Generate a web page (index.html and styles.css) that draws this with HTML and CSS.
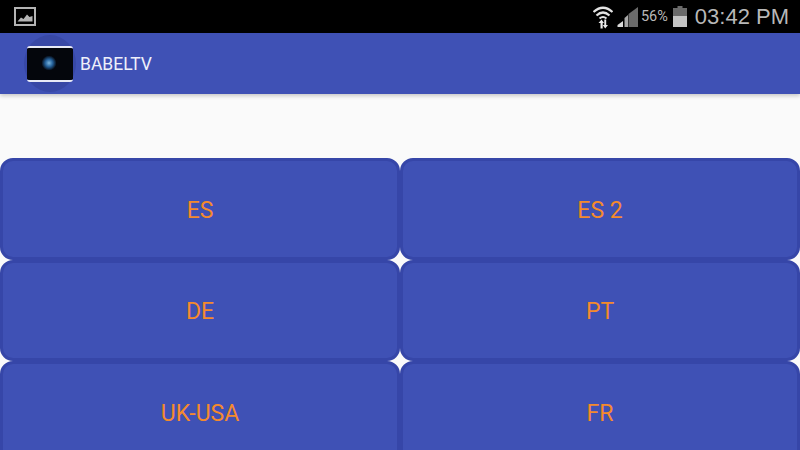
FILE: index.html
```html
<!DOCTYPE html>
<html>
<head>
  <title>BabelTV</title>
  <link rel="stylesheet" href="styles.css">
</head>
<body>
  <div class="status-bar">
    <svg class="status-picture" width="22" height="19" viewBox="0 0 22 19">
      <rect x="1" y="1" width="20" height="17" fill="none" stroke="#b4b4b4" stroke-width="2"/>
      <path d="M3.500 14.500 L7 10.500 L9.500 12 L13 7.500 L15.500 10 L18.500 9 V14.500 Z" fill="#b4b4b4"/>
    </svg>
    <div class="status-right">
      <svg class="status-wifi" width="20" height="24" viewBox="0 0 20 24">
        <path d="M0.500 7 Q10 -1.500 19.500 7" fill="none" stroke="#e2e2e2" stroke-width="2.200"/>
        <path d="M3.500 10.500 Q10 4.500 16.500 10.500" fill="none" stroke="#e2e2e2" stroke-width="2.200"/>
        <path d="M6.500 13.500 Q10 10.500 13.500 13.500" fill="none" stroke="#e2e2e2" stroke-width="2"/>
        <path d="M7.500 23.500 V18 H5.500 L8.500 14.500 L11 18 H9.700 V23.500 Z M11.300 14.500 H13.200 V20 H15 L12.200 23.500 L9.800 20 H11.300 Z" fill="#ececec"/>
      </svg>
      <svg class="status-signal" width="21" height="22" viewBox="0 0 21 22">
        <path d="M21 1 V21 H11.500 V8 Z" fill="#6a6a6a"/>
        <path d="M11 9 V21 H7.500 V12 Z" fill="#a8a8a8"/>
        <path d="M6 15 V21 H0.500 V19 Z" fill="#dadada"/>
      </svg>
      <span class="status-battery-text">56%</span>
      <svg class="status-battery" width="14" height="21" viewBox="0 0 14 21">
        <path d="M4.500 0 H9.500 V2 H14 V21 H0 V2 H4.500 Z" fill="#6a6a6a"/>
        <rect y="10" width="14" height="11" fill="#c4c4c4"/>
      </svg>
      <span class="status-time">03:42 PM</span>
    </div>
  </div>

  <header class="app-bar">
    <div class="logo">
      <div class="logo-screen">
        <svg width="46" height="32" viewBox="0 0 46 32">
          <defs>
            <radialGradient id="globe">
              <stop offset="0" stop-color="#7ab4dc"/>
              <stop offset="0.5" stop-color="#24609a"/>
              <stop offset="1" stop-color="#04070f"/>
            </radialGradient>
          </defs>
          <rect width="46" height="32" fill="#04060c"/>
          <circle cx="22" cy="15" r="7.500" fill="url(#globe)"/>
        </svg>
      </div>
    </div>
    <h1>BABELTV</h1>
  </header>

  <main class="channels">
    <button class="channel">ES</button>
    <button class="channel">ES 2</button>
    <button class="channel">DE</button>
    <button class="channel">PT</button>
    <button class="channel">UK-USA</button>
    <button class="channel">FR</button>
  </main>
</body>
</html>
```

FILE: styles.css
```css
html,
body {
  height: 100%;
}

body {
  margin: 0;
  width: 800px;
  height: 450px;
  overflow: hidden;
  background-color: #fafafa;
  font-family: Roboto, "Liberation Sans", sans-serif;
}

.status-bar {
  height: 33px;
  background-color: #000;
  display: flex;
  align-items: center;
  justify-content: space-between;
  padding: 0 11px 0 14px;
}

.status-picture {
  display: block;
}

.status-right {
  display: flex;
  align-items: center;
}

.status-wifi {
  margin-right: 4px;
}

.status-signal {
  margin-right: 3px;
}

.status-battery-text {
  color: #b8b8b8;
  font-size: 14.500px;
  margin-right: 5px;
}

.status-battery {
  margin-right: 8px;
}

.status-time {
  color: #b8b8b8;
  font-size: 22px;
  font-family: "Liberation Sans", sans-serif;
}

.app-bar {
  height: 61px;
  background-color: #3f51b5;
  display: flex;
  align-items: center;
  padding-left: 24px;
  box-shadow: 0 2px 4px rgba(0, 0, 0, 0.2);
}

.app-bar h1 {
  margin: 0 0 0 4px;
  color: #eef0fa;
  font-size: 17.500px;
  font-weight: 400;
}

.logo {
  width: 52px;
  height: 57px;
  border-radius: 50%;
  background-color: #3848a6;
  display: flex;
  align-items: center;
  justify-content: center;
}

.logo-screen {
  width: 46px;
  height: 32px;
  border-top: 2px solid #e8eaf6;
  border-bottom: 2px solid #e8eaf6;
  border-radius: 3px;
  overflow: hidden;
}

.logo-screen svg {
  display: block;
}

.channels {
  margin-top: 64px;
  display: grid;
  grid-template-columns: 400px 400px;
  grid-auto-rows: 101.500px;
}

.channel {
  border: 3px solid #3646a8;
  border-radius: 13px;
  background-color: #3f51b5;
  color: #f58a2c;
  font-family: Roboto, "Liberation Sans", sans-serif;
  font-size: 23px;
  padding: 3px 0 0;
  cursor: pointer;
}
```
